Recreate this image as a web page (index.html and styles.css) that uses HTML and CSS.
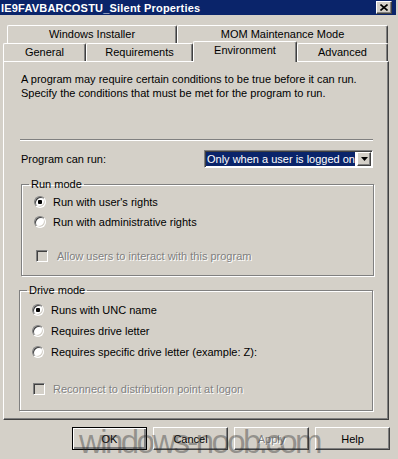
FILE: index.html
```html
<!DOCTYPE html>
<html lang="en">
<head>
  <meta charset="UTF-8" />
  <title>IE9FAVBARCOSTU_Silent Properties</title>
  <link rel="stylesheet" href="styles.css">
</head>
<body>

<div class="window">
  <div class="titlebar">
    <span class="title">IE9FAVBARCOSTU_Silent Properties</span>
    <span class="close-btn">
      <svg width="8" height="7" viewBox="0 0 8 7"><path d="M0.5 0.5 L7.5 6.5 M7.5 0.5 L0.5 6.5" stroke="#000" stroke-width="1.6" fill="none"/></svg>
    </span>
  </div>

  <div class="tabs">
    <div class="tab-row row-back">
      <div class="tab tab-installer">Windows Installer</div>
      <div class="tab tab-mom">MOM Maintenance Mode</div>
    </div>
    <div class="tab-row row-front">
      <div class="tab tab-general">General</div>
      <div class="tab tab-req">Requirements</div>
      <div class="tab tab-env active">Environment</div>
      <div class="tab tab-adv">Advanced</div>
    </div>
  </div>

  <div class="panel">
    <p class="intro">A program may require certain conditions to be true before it can run.<br>Specify the conditions that must be met for the program to run.</p>

    <div class="separator"></div>

    <div class="field-row">
      <span>Program can run:</span>
      <div class="combo">
        <span class="combo-value">Only when a user is logged on</span>
        <span class="combo-arrow">
          <svg width="7" height="4" viewBox="0 0 7 4"><path d="M0 0 H7 L3.5 4 Z" fill="#000"/></svg>
        </span>
      </div>
    </div>

    <fieldset class="group run-mode">
      <legend>Run mode</legend>
      <div class="option"><span class="radio checked"></span>Run with user's rights</div>
      <div class="option"><span class="radio"></span>Run with administrative rights</div>
      <div class="option check-row disabled"><span class="checkbox"></span>Allow users to interact with this program</div>
    </fieldset>

    <fieldset class="group drive-mode">
      <legend>Drive mode</legend>
      <div class="option"><span class="radio checked"></span>Runs with UNC name</div>
      <div class="option"><span class="radio"></span>Requires drive letter</div>
      <div class="option"><span class="radio"></span>Requires specific drive letter (example: Z):</div>
      <div class="option check-row disabled"><span class="checkbox"></span>Reconnect to distribution point at logon</div>
    </fieldset>
  </div>

  <div class="buttons">
    <button class="default">OK</button>
    <button>Cancel</button>
    <button class="disabled">Apply</button>
    <button>Help</button>
  </div>

  <div class="watermark">windows-noob.com</div>
</div>

</body>
</html>
```

FILE: styles.css
```css
body {
  margin: 0;
  background: #d4d0c8;
  font-family: "Liberation Sans", Arial, sans-serif;
  font-size: 11px;
  color: #000;
}

.window {
  position: relative;
  width: 398px;
  height: 459px;
  overflow: hidden;
}

/* title bar */
.titlebar {
  display: flex;
  align-items: center;
  justify-content: space-between;
  width: 396px;
  height: 15px;
  background: #0a246a;
}

.title {
  color: #fff;
  font-weight: bold;
  font-size: 11px;
  letter-spacing: 0.2px;
  padding-left: 1px;
}

.close-btn {
  display: flex;
  align-items: center;
  justify-content: center;
  width: 14px;
  height: 11px;
  margin-right: 4px;
  background: #d4d0c8;
  border: 1px solid;
  border-color: #fff #404040 #404040 #fff;
  box-shadow: inset -1px -1px 0 #808080;
}

/* tabs */
.tabs {
  margin-top: 10px;
}

.tab-row {
  display: flex;
  height: 18px;
}

.row-back {
  padding-left: 7px;
}

.row-front {
  padding-left: 3px;
}

.tab {
  box-sizing: border-box;
  height: 18px;
  line-height: 17px;
  text-align: center;
  border-top: 1px solid #fff;
  border-left: 1px solid #fff;
  border-right: 1px solid #404040;
  box-shadow: inset -1px 0 0 #808080;
  border-radius: 2px 2px 0 0;
  background: #d4d0c8;
}

.tab-installer { width: 170px; }
.tab-mom { width: 211px; }
.tab-general { width: 83px; }
.tab-req { width: 107px; }
.tab-env { width: 104px; }
.tab-adv { width: 91px; }

.tab.active {
  position: relative;
  z-index: 1;
  height: 21px;
  line-height: 17px;
  margin-top: -2px;
}

/* page */
.panel {
  box-sizing: border-box;
  width: 386px;
  height: 359px;
  margin-left: 3px;
  padding: 10px 0 0 17px;
  border-top: 1px solid #fff;
  border-left: 1px solid #fff;
  border-right: 1px solid #404040;
  border-bottom: 1px solid #404040;
  box-shadow: inset -1px -1px 0 #808080;
}

.intro {
  margin: 0;
  line-height: 14px;
}

.separator {
  width: 353px;
  margin: 39px 0 0 -1px;
  border-top: 1px solid #808080;
  border-bottom: 1px solid #fff;
}

.field-row {
  display: flex;
  align-items: center;
  width: 352px;
  height: 18px;
  margin-top: 9px;
}

.combo {
  box-sizing: border-box;
  display: flex;
  align-items: center;
  width: 169px;
  height: 18px;
  margin-left: auto;
  padding: 1px;
  background: #fff;
  border: 1px solid;
  border-color: #808080 #fff #fff #808080;
  box-shadow: inset 1px 1px 0 #404040;
}

.combo-value {
  flex: 1;
  height: 14px;
  line-height: 14px;
  padding-left: 1px;
  background: #0a246a;
  color: #fff;
  white-space: nowrap;
}

.combo-arrow {
  box-sizing: border-box;
  display: flex;
  align-items: center;
  justify-content: center;
  width: 14px;
  height: 14px;
  margin-left: 2px;
  background: #d4d0c8;
  border: 1px solid;
  border-color: #fff #404040 #404040 #fff;
  box-shadow: inset -1px -1px 0 #808080;
}

/* group boxes */
.group {
  margin: 0;
  padding: 0;
  border: 1px solid #808080;
  box-shadow: 1px 1px 0 #fff, inset 1px 1px 0 #fff;
}

.group legend {
  margin-left: 7px;
  padding: 0 2px;
  line-height: 14px;
}

.run-mode {
  width: 351px;
  margin-top: 9px;
  padding: 1px 0 9px;
}

.drive-mode {
  width: 352px;
  margin: 7px 0 0 -2px;
  padding: 2px 0 11px;
}

.option {
  display: flex;
  align-items: center;
  gap: 7px;
  height: 20px;
  padding-left: 12px;
}

.drive-mode .option {
  height: 21px;
}

.run-mode .check-row {
  margin-top: 14px;
  padding-left: 14px;
  gap: 9px;
}

.drive-mode .check-row {
  margin-top: 16px;
  padding-left: 13px;
  gap: 8px;
}

.radio {
  box-sizing: border-box;
  width: 12px;
  height: 12px;
  border-radius: 50%;
  background: #fff;
  border: 1px solid;
  border-color: #808080 #fff #fff #808080;
  box-shadow: inset 1px 1px 0 #404040, inset -1px -1px 0 #d4d0c8;
}

.radio.checked {
  background: radial-gradient(circle, #000 0 2px, #fff 2.5px);
}

.checkbox {
  box-sizing: border-box;
  width: 12px;
  height: 12px;
  background: #d4d0c8;
  border: 1px solid;
  border-color: #808080 #fff #fff #808080;
  box-shadow: inset 1px 1px 0 #404040, inset -1px -1px 0 #d4d0c8;
}

.disabled {
  color: #808080;
  text-shadow: 1px 1px 0 #fff;
}

/* bottom buttons */
.buttons {
  display: flex;
  gap: 6px;
  margin-top: 7px;
  padding-left: 72px;
}

button {
  box-sizing: border-box;
  width: 75px;
  height: 23px;
  padding: 0;
  font-family: "Liberation Sans", Arial, sans-serif;
  font-size: 11px;
  color: #000;
  background: #d4d0c8;
  border: 1px solid;
  border-color: #fff #404040 #404040 #fff;
  box-shadow: inset -1px -1px 0 #808080;
}

button.default {
  border: 1px solid #000;
  box-shadow: inset 1px 1px 0 #fff, inset -2px -2px 0 #808080;
}

button.disabled {
  color: #808080;
}

.watermark {
  position: absolute;
  left: 79px;
  top: 425px;
  font-size: 33px;
  line-height: 1;
  letter-spacing: -2.6px;
  color: rgba(40, 40, 40, 0.38);
  pointer-events: none;
}
```
